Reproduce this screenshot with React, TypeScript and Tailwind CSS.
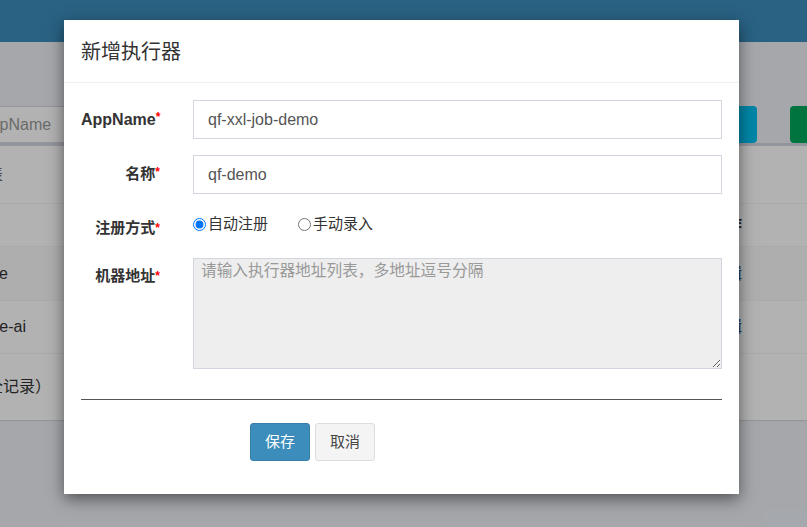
import React from 'react';

const font = { fontFamily: '"Liberation Sans", Arial, "Noto Sans CJK SC", sans-serif' };

function Row({ h, striped, left, leftPr, right, rightBold }: { h: string; striped?: boolean; left?: string; leftPr?: string; right?: string; rightBold?: boolean }) {
  return (
    <div className={`flex items-center border-t border-[#f4f4f4] ${h} ${striped ? 'bg-[#f9f9f9]' : ''}`}>
      <div className={`w-[64px] overflow-hidden flex justify-end whitespace-nowrap text-[16px] text-[#333] ${leftPr ?? ''}`}>
        {left}
      </div>
      <div className={`w-[678px] flex justify-end whitespace-nowrap text-[16px] ${rightBold ? 'font-bold text-[#333]' : 'text-[#1e4e7c]'}`}>{right}</div>
    </div>
  );
}

export default function App() {
  return (
    <div className="relative w-[807px] h-[527px] overflow-hidden bg-[#ecf0f5]" style={font}>
      {/* 背景页面 */}
      <div className="h-[42px] bg-[#3c8dbc]" />
      <div className="pt-[64px]">
        <div className="flex items-center h-[37px]">
          <div className="ml-[-33px] w-[300px] h-[37px] border border-[#d2d6de] bg-white px-3 flex items-center text-[16px] text-[#999]">
            AppName
          </div>
          <div className="flex-1" />
          <div className="w-[60px] h-[37px] rounded bg-[#00c0ef] mr-[33px]" />
          <div className="w-[60px] h-[37px] rounded bg-[#00a65a] mr-[-43px]" />
        </div>
        <div className="border-t-[3px] border-[#d2d6de] bg-white shadow-[0_1px_1px_rgba(0,0,0,0.1)]">
          <div className="flex items-center h-[57px]">
            <div className="w-[64px] overflow-hidden flex justify-end whitespace-nowrap text-[16px] text-[#666] pr-[61px]">执行器列表</div>
          </div>
          <Row h="h-[43px]" right="操作" rightBold />
          <Row h="h-[54px]" striped left="xxl-job-executor-sample" leftPr="pr-[56px]" right="编辑" />
          <Row h="h-[53px]" left="xxl-job-executor-sample-ai" leftPr="pr-[38px]" right="编辑" />
          <Row h="h-[67px]" left="无（全记录）" leftPr="pr-[13px]" />
        </div>
      </div>

      {/* 遮罩 */}
      <div className="absolute inset-0 bg-black/30" />

      {/* 新增执行器 弹窗 */}
      <div className="absolute left-[64px] top-[20px] w-[675px] bg-white shadow-[0_5px_15px_rgba(0,0,0,0.5)]">
        <div className="h-[63px] px-[17px] flex items-center border-b border-[#f0f0f0]">
          <h4 className="text-[20px] text-[#333] leading-none" style={{ fontFamily: '"Noto Sans CJK SC", sans-serif' }}>新增执行器</h4>
        </div>
        <div className="px-[17px] pt-[17px] pb-[33px] text-[#333]">
          <div className="flex items-center">
            <label className="w-[79px] text-right text-[16px] font-bold whitespace-nowrap">
              AppName<span className="text-[#f00] text-[12px] align-top">*</span>
            </label>
            <input
              readOnly
              value="qf-xxl-job-demo"
              className="ml-[33px] w-[529px] h-[39px] border border-[#d2d6de] px-[14px] text-[16px] text-[#555] outline-none"
            />
          </div>
          <div className="flex items-center mt-[16px]">
            <label className="w-[79px] text-right text-[15px] font-bold">
              名称<span className="text-[#f00] text-[12px] align-top">*</span>
            </label>
            <input
              readOnly
              value="qf-demo"
              className="ml-[33px] w-[529px] h-[39px] border border-[#d2d6de] px-[14px] text-[16px] text-[#555] outline-none"
            />
          </div>
          <div className="flex items-start mt-[16px] h-[28px]">
            <label className="w-[79px] text-right text-[15px] font-bold leading-[20px] pt-[8px]">
              注册方式<span className="text-[#f00] text-[12px] align-top">*</span>
            </label>
            <div className="ml-[33px] flex items-center h-[28px] text-[15px]">
              <label className="w-[105px] flex items-center">
                <input type="radio" name="addressType" defaultChecked className="m-0 w-[13px] h-[13px]" />
                <span className="ml-[2px]">自动注册</span>
              </label>
              <label className="flex items-center">
                <input type="radio" name="addressType" className="m-0 w-[13px] h-[13px]" />
                <span className="ml-[2px]">手动录入</span>
              </label>
            </div>
          </div>
          <div className="flex items-start mt-[20px]">
            <label className="w-[79px] text-right text-[15px] font-bold leading-[20px] pt-[8px]">
              机器地址<span className="text-[#f00] text-[12px] align-top">*</span>
            </label>
            <textarea
              readOnly
              placeholder="请输入执行器地址列表，多地址逗号分隔"
              className="ml-[33px] w-[529px] h-[111px] border border-[#d2d6de] bg-[#eee] px-[7px] py-px text-[15.7px] leading-[22px] placeholder:text-[#999] outline-none"
            />
          </div>
          <div className="mt-[30px] h-px bg-[#555]" />
          <div className="mt-[23px] ml-[169px] flex gap-[5px]">
            <button className="w-[60px] h-[38px] rounded-[3px] bg-[#3c8dbc] border border-[#367fa9] text-white text-[15px]">保存</button>
            <button className="w-[60px] h-[38px] rounded-[3px] bg-[#f4f4f4] border border-[#ddd] text-[#444] text-[15px]">取消</button>
          </div>
        </div>
      </div>
    </div>
  );
}
